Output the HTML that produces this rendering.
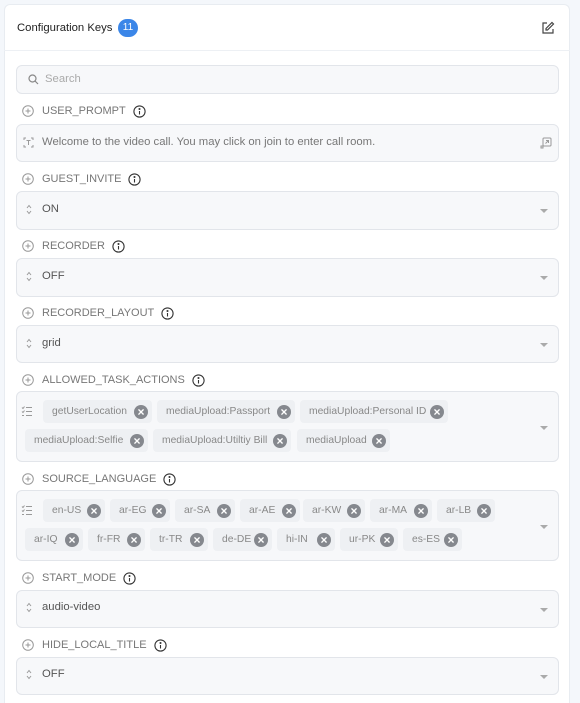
<!DOCTYPE html>
<html style="overflow:hidden"><head><meta charset="utf-8"><style>
*{box-sizing:border-box;margin:0;padding:0}
html,body{width:580px;height:703px;overflow:hidden}
body{background:#f4f7fb;font-family:"Liberation Sans",sans-serif;position:relative}
.card{position:absolute;left:4px;top:4px;width:566px;height:699px;background:#fff;border:1px solid #e8ecf1;border-bottom:none;border-radius:6px 6px 0 0}
.hdr{position:absolute;left:4px;top:4px;width:566px;height:47px;border-bottom:1px solid #edf0f4}
.title{position:absolute;left:17px;top:22px;font-size:11.3px;color:#222}
.badge{position:absolute;left:118px;top:19px;width:20px;height:18px;border-radius:9px;background:#3b86e8;color:#fff;font-size:10px;text-align:center;line-height:18px}
.box{position:absolute;left:16px;width:543px;background:#f7f8fa;border:1px solid #e2e5ea;border-radius:6px}
.lbl{position:absolute;left:22px;height:14px;font-size:11px;color:#777;display:flex;align-items:center;letter-spacing:0}
.lbl svg{flex:none}
.lbl span{margin:0 7px 0 8px}
.val{position:absolute;left:26px;font-size:11.3px;color:#555;display:flex;align-items:center}
.val span{margin-left:10px}
.caret{position:absolute;right:10px;width:0;height:0;border-left:4px solid transparent;border-right:4px solid transparent;border-top:4px solid #aaa}
.chip{position:absolute;height:23px;background:#eef0f3;border-radius:4px;font-size:10.3px;color:#888;display:flex;align-items:center;padding-left:9px;white-space:nowrap}
.x{position:absolute;right:4px;top:4.5px;width:14px;height:14px;border-radius:50%;background:#85888e;color:#fff;font-size:12px;line-height:14px;text-align:center;font-weight:bold;font-style:normal}
</style></head><body>
<div class="card"></div>
<div class="hdr"></div>
<div class="title">Configuration Keys</div>
<div class="badge">11</div>
<svg style="position:absolute;left:541px;top:21px" width="14" height="14" viewBox="0 0 14 14" fill="none" stroke="#444" stroke-width="1.2"><path d="M6 2H2v10h10V8"/><path d="M11 1.5l1.5 1.5-6 6H5V7.5z"/></svg>

<div class="box" style="top:65px;height:29px"></div>
<svg style="position:absolute;left:28px;top:74px" width="11" height="11" viewBox="0 0 11 11" fill="none" stroke="#888" stroke-width="1.2"><circle cx="4.5" cy="4.5" r="3.5"/><path d="M7 7l3 3"/></svg>
<div style="position:absolute;left:45px;top:73px;font-size:11.3px;color:#aaa">Search</div>

<div class="lbl" style="top:104px"><svg width="12" height="12" viewBox="0 0 12 12" fill="none" stroke="#999"><circle cx="6" cy="6" r="5.3"/><path d="M6 3.5v5M3.5 6h5"/></svg><span>USER_PROMPT</span><svg width="13" height="13" viewBox="0 0 13 13" fill="none" stroke="#333" stroke-width="1.1"><circle cx="6.5" cy="6.5" r="5.6"/><path d="M6.5 6v3.5"/><circle cx="6.5" cy="4" r=".5" fill="#333"/></svg></div>
<div class="box" style="top:124px;height:38px"></div>
<div class="val" style="top:136px;left:23px;color:#777"><svg width="11" height="11" viewBox="0 0 11 11" fill="none" stroke="#999"><path d="M1 3V1h2M8 1h2v2M10 8v2H8M3 10H1V8M3.5 3.5h4M5.5 3.5v4.5"/></svg><span style="margin-left:8px">Welcome to the video call. You may click on join to enter call room.</span></div>
<svg style="position:absolute;left:540px;top:137px" width="12" height="12" viewBox="0 0 12 12" fill="none" stroke="#999"><rect x="3" y="1" width="8" height="8" rx="1"/><rect x="1" y="9" width="2" height="2"/><path d="M5.5 6.5l3-3M6 3.5h2.5V6"/></svg>

<div class="lbl" style="top:172px"><svg width="12" height="12" viewBox="0 0 12 12" fill="none" stroke="#999"><circle cx="6" cy="6" r="5.3"/><path d="M6 3.5v5M3.5 6h5"/></svg><span>GUEST_INVITE</span><svg width="13" height="13" viewBox="0 0 13 13" fill="none" stroke="#333" stroke-width="1.1"><circle cx="6.5" cy="6.5" r="5.6"/><path d="M6.5 6v3.5"/><circle cx="6.5" cy="4" r=".5" fill="#333"/></svg></div>
<div class="box" style="top:191px;height:39px"><div class="caret" style="top:17px"></div></div>
<div class="val" style="top:203px"><svg width="6" height="11" viewBox="0 0 6 11" fill="none" stroke="#999"><path d="M1 4l2-2.5L5 4M1 7l2 2.5L5 7"/></svg><span>ON</span></div>

<div class="lbl" style="top:239px"><svg width="12" height="12" viewBox="0 0 12 12" fill="none" stroke="#999"><circle cx="6" cy="6" r="5.3"/><path d="M6 3.5v5M3.5 6h5"/></svg><span>RECORDER</span><svg width="13" height="13" viewBox="0 0 13 13" fill="none" stroke="#333" stroke-width="1.1"><circle cx="6.5" cy="6.5" r="5.6"/><path d="M6.5 6v3.5"/><circle cx="6.5" cy="4" r=".5" fill="#333"/></svg></div>
<div class="box" style="top:258px;height:39px"><div class="caret" style="top:17px"></div></div>
<div class="val" style="top:270px"><svg width="6" height="11" viewBox="0 0 6 11" fill="none" stroke="#999"><path d="M1 4l2-2.5L5 4M1 7l2 2.5L5 7"/></svg><span>OFF</span></div>

<div class="lbl" style="top:306px"><svg width="12" height="12" viewBox="0 0 12 12" fill="none" stroke="#999"><circle cx="6" cy="6" r="5.3"/><path d="M6 3.5v5M3.5 6h5"/></svg><span>RECORDER_LAYOUT</span><svg width="13" height="13" viewBox="0 0 13 13" fill="none" stroke="#333" stroke-width="1.1"><circle cx="6.5" cy="6.5" r="5.6"/><path d="M6.5 6v3.5"/><circle cx="6.5" cy="4" r=".5" fill="#333"/></svg></div>
<div class="box" style="top:325px;height:38px"><div class="caret" style="top:17px"></div></div>
<div class="val" style="top:337px"><svg width="6" height="11" viewBox="0 0 6 11" fill="none" stroke="#999"><path d="M1 4l2-2.5L5 4M1 7l2 2.5L5 7"/></svg><span>grid</span></div>

<div class="lbl" style="top:373px"><svg width="12" height="12" viewBox="0 0 12 12" fill="none" stroke="#999"><circle cx="6" cy="6" r="5.3"/><path d="M6 3.5v5M3.5 6h5"/></svg><span>ALLOWED_TASK_ACTIONS</span><svg width="13" height="13" viewBox="0 0 13 13" fill="none" stroke="#333" stroke-width="1.1"><circle cx="6.5" cy="6.5" r="5.6"/><path d="M6.5 6v3.5"/><circle cx="6.5" cy="4" r=".5" fill="#333"/></svg></div>
<div class="box" style="top:391px;height:71px"><div class="caret" style="top:34px"></div></div>
<svg style="position:absolute;left:21px;top:406px" width="12" height="11" viewBox="0 0 12 11" fill="none" stroke="#999"><path d="M5 1.5h6M5 5.5h6M5 9.5h6M1 1.5l1 1 1.5-2M1 5.5l1 1 1.5-2M1 9.5h2"/></svg>
<div class="chip" style="left:43px;top:400px;width:109px">getUserLocation<i class="x">×</i></div>
<div class="chip" style="left:157px;top:400px;width:138px">mediaUpload:Passport<i class="x">×</i></div>
<div class="chip" style="left:300px;top:400px;width:148px">mediaUpload:Personal ID<i class="x">×</i></div>
<div class="chip" style="left:25px;top:429px;width:123px">mediaUpload:Selfie<i class="x">×</i></div>
<div class="chip" style="left:153px;top:429px;width:138px">mediaUpload:Utiltiy Bill<i class="x">×</i></div>
<div class="chip" style="left:297px;top:429px;width:93px">mediaUpload<i class="x">×</i></div>

<div class="lbl" style="top:472px"><svg width="12" height="12" viewBox="0 0 12 12" fill="none" stroke="#999"><circle cx="6" cy="6" r="5.3"/><path d="M6 3.5v5M3.5 6h5"/></svg><span>SOURCE_LANGUAGE</span><svg width="13" height="13" viewBox="0 0 13 13" fill="none" stroke="#333" stroke-width="1.1"><circle cx="6.5" cy="6.5" r="5.6"/><path d="M6.5 6v3.5"/><circle cx="6.5" cy="4" r=".5" fill="#333"/></svg></div>
<div class="box" style="top:490px;height:71px"><div class="caret" style="top:34px"></div></div>
<svg style="position:absolute;left:21px;top:505px" width="12" height="11" viewBox="0 0 12 11" fill="none" stroke="#999"><path d="M5 1.5h6M5 5.5h6M5 9.5h6M1 1.5l1 1 1.5-2M1 5.5l1 1 1.5-2M1 9.5h2"/></svg>
<div class="chip" style="left:43px;top:499px;width:62px">en-US<i class="x">×</i></div>
<div class="chip" style="left:110px;top:499px;width:60px">ar-EG<i class="x">×</i></div>
<div class="chip" style="left:175px;top:499px;width:60px">ar-SA<i class="x">×</i></div>
<div class="chip" style="left:240px;top:499px;width:60px">ar-AE<i class="x">×</i></div>
<div class="chip" style="left:303px;top:499px;width:62px">ar-KW<i class="x">×</i></div>
<div class="chip" style="left:370px;top:499px;width:62px">ar-MA<i class="x">×</i></div>
<div class="chip" style="left:437px;top:499px;width:58px">ar-LB<i class="x">×</i></div>
<div class="chip" style="left:25px;top:528px;width:58px">ar-IQ<i class="x">×</i></div>
<div class="chip" style="left:88px;top:528px;width:57px">fr-FR<i class="x">×</i></div>
<div class="chip" style="left:150px;top:528px;width:58px">tr-TR<i class="x">×</i></div>
<div class="chip" style="left:213px;top:528px;width:59px">de-DE<i class="x">×</i></div>
<div class="chip" style="left:277px;top:528px;width:58px">hi-IN<i class="x">×</i></div>
<div class="chip" style="left:340px;top:528px;width:58px">ur-PK<i class="x">×</i></div>
<div class="chip" style="left:403px;top:528px;width:59px">es-ES<i class="x">×</i></div>

<div class="lbl" style="top:571px"><svg width="12" height="12" viewBox="0 0 12 12" fill="none" stroke="#999"><circle cx="6" cy="6" r="5.3"/><path d="M6 3.5v5M3.5 6h5"/></svg><span>START_MODE</span><svg width="13" height="13" viewBox="0 0 13 13" fill="none" stroke="#333" stroke-width="1.1"><circle cx="6.5" cy="6.5" r="5.6"/><path d="M6.5 6v3.5"/><circle cx="6.5" cy="4" r=".5" fill="#333"/></svg></div>
<div class="box" style="top:590px;height:38px"><div class="caret" style="top:17px"></div></div>
<div class="val" style="top:601px"><svg width="6" height="11" viewBox="0 0 6 11" fill="none" stroke="#999"><path d="M1 4l2-2.5L5 4M1 7l2 2.5L5 7"/></svg><span>audio-video</span></div>

<div class="lbl" style="top:638px"><svg width="12" height="12" viewBox="0 0 12 12" fill="none" stroke="#999"><circle cx="6" cy="6" r="5.3"/><path d="M6 3.5v5M3.5 6h5"/></svg><span>HIDE_LOCAL_TITLE</span><svg width="13" height="13" viewBox="0 0 13 13" fill="none" stroke="#333" stroke-width="1.1"><circle cx="6.5" cy="6.5" r="5.6"/><path d="M6.5 6v3.5"/><circle cx="6.5" cy="4" r=".5" fill="#333"/></svg></div>
<div class="box" style="top:657px;height:38px"><div class="caret" style="top:17px"></div></div>
<div class="val" style="top:668px"><svg width="6" height="11" viewBox="0 0 6 11" fill="none" stroke="#999"><path d="M1 4l2-2.5L5 4M1 7l2 2.5L5 7"/></svg><span>OFF</span></div>
</body></html>
